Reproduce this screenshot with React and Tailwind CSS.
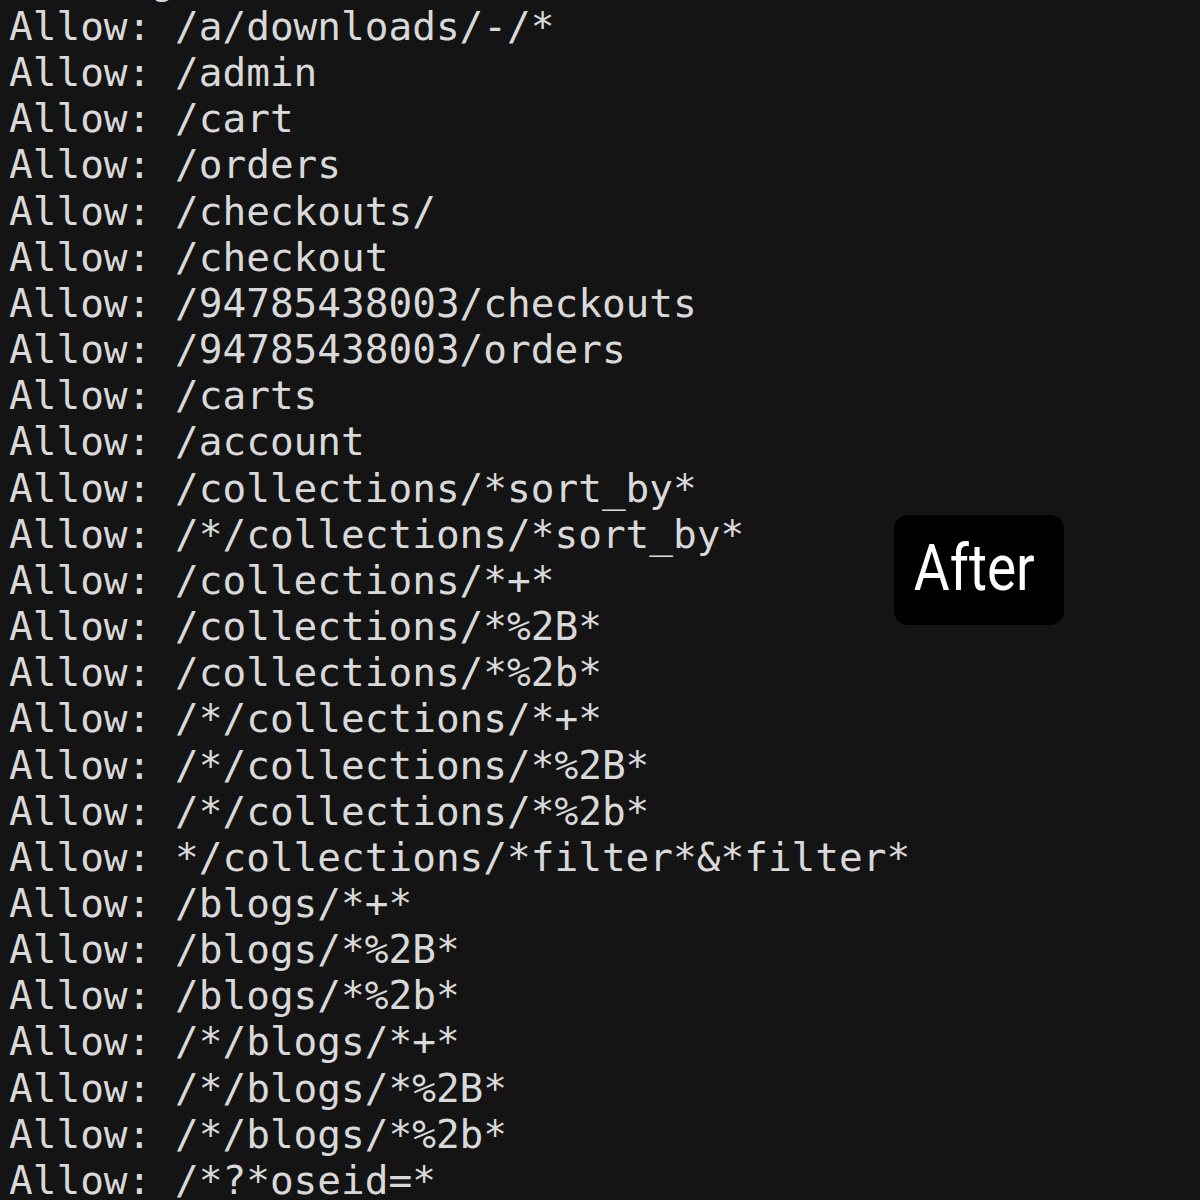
import React from 'react';

const lines = [
  '/a/downloads/-/*',
  '/admin',
  '/cart',
  '/orders',
  '/checkouts/',
  '/checkout',
  '/94785438003/checkouts',
  '/94785438003/orders',
  '/carts',
  '/account',
  '/collections/*sort_by*',
  '/*/collections/*sort_by*',
  '/collections/*+*',
  '/collections/*%2B*',
  '/collections/*%2b*',
  '/*/collections/*+*',
  '/*/collections/*%2B*',
  '/*/collections/*%2b*',
  '*/collections/*filter*&*filter*',
  '/blogs/*+*',
  '/blogs/*%2B*',
  '/blogs/*%2b*',
  '/*/blogs/*+*',
  '/*/blogs/*%2B*',
  '/*/blogs/*%2b*',
  '/*?*oseid=*',
];

export default function App() {
  return (
    <div className="relative w-[1200px] h-[1200px] overflow-hidden bg-[#141414]">
      {/* Terminal text */}
      <pre
        className="pt-[3px] pl-[9px] text-[39.4px] leading-[46.16px] text-[#d9d9d9] whitespace-pre"
        style={{ fontFamily: '"DejaVu Sans Mono", "Liberation Mono", monospace' }}
      >
        <div className="mt-[-46.16px]">Sorting</div>
        {lines.map((path, i) => (
          <div key={i}>Allow: {path}</div>
        ))}
      </pre>

      {/* Label */}
      <div className="absolute left-[894px] top-[515px] w-[170px] h-[110px] rounded-[14px] bg-black flex items-center justify-center pr-[10px]">
        <span
          className="inline-block text-[64px] leading-none text-white scale-x-[0.86] mt-[-2px]"
          style={{ fontFamily: 'Roboto, "Noto Sans", sans-serif' }}
        >
          After
        </span>
      </div>
    </div>
  );
}
